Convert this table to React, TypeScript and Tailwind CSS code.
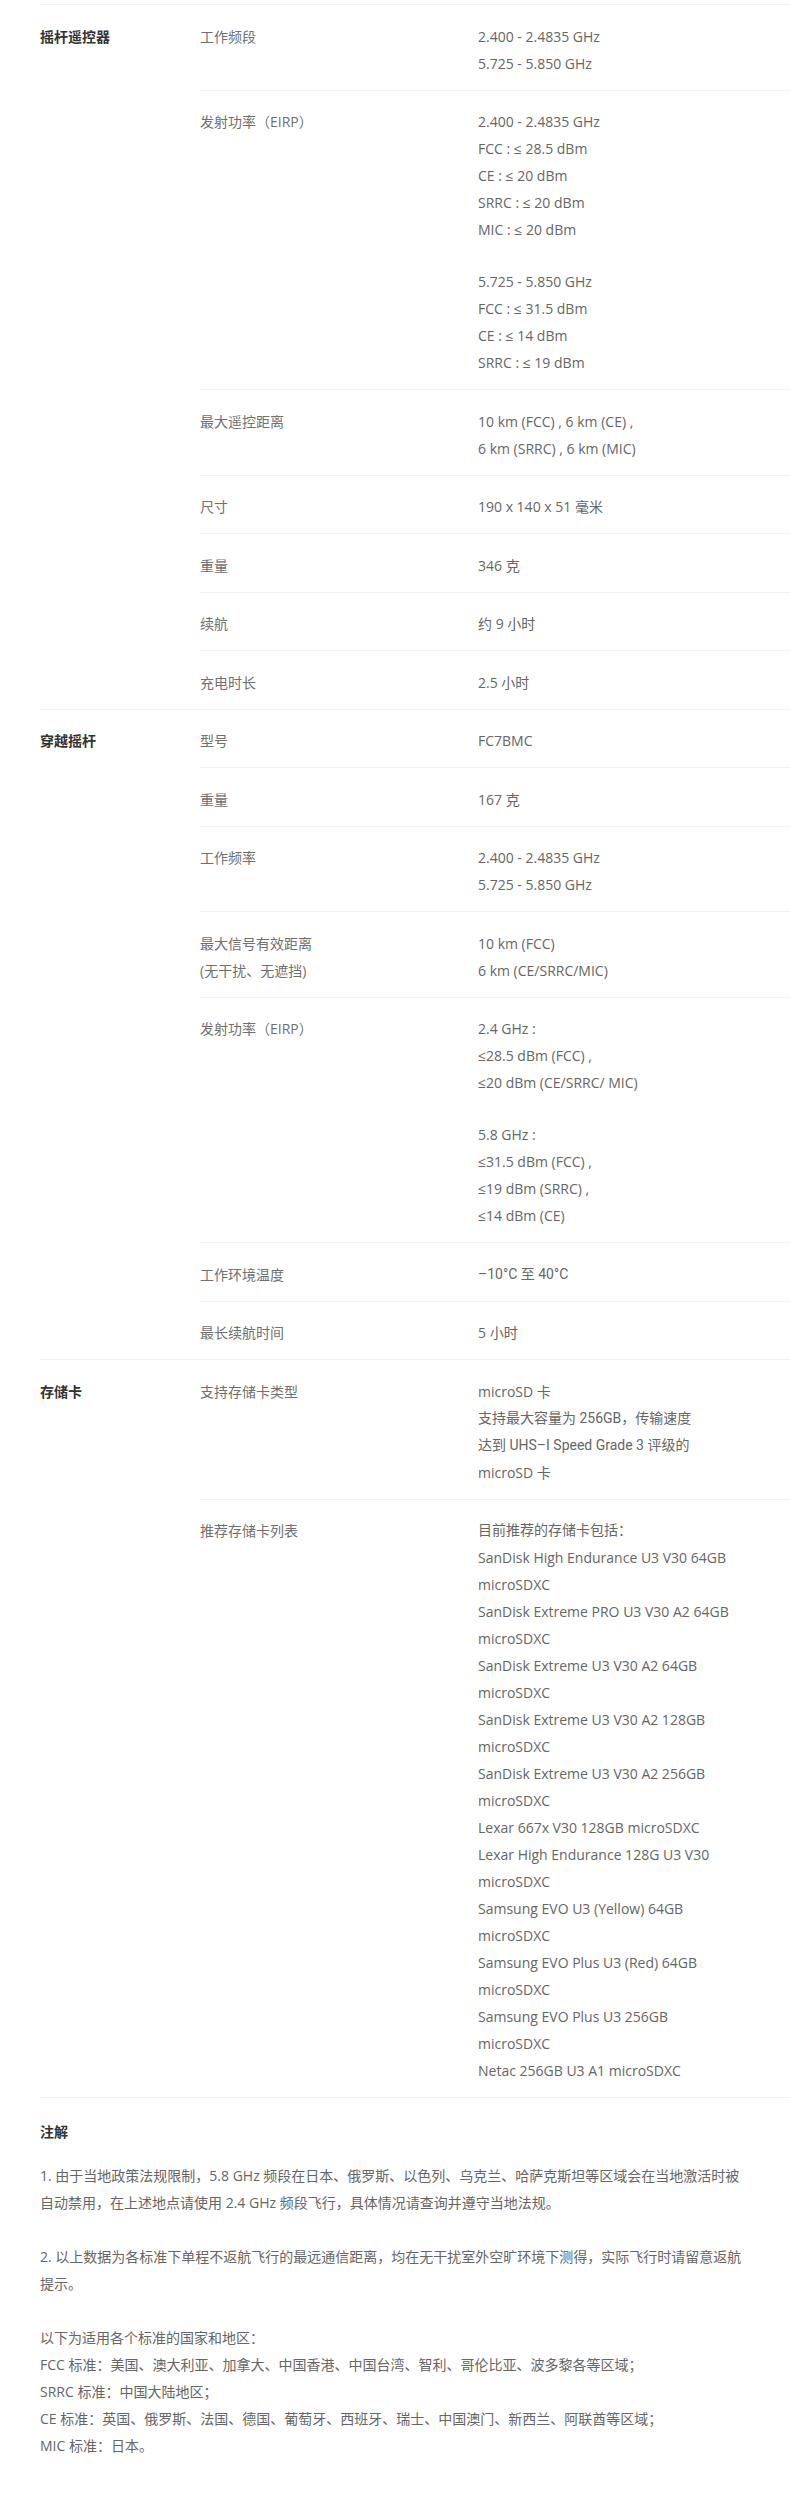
import React from "react";

type Row = { label: React.ReactNode[]; value: React.ReactNode[]; alt?: boolean };
type Group = { title: string; rows: Row[] };

const BLANK = "__blank__";

const groups: Group[] = [
  {
    title: "摇杆遥控器",
    rows: [
      { label: ["工作频段"], value: ["2.400 - 2.4835 GHz", "5.725 - 5.850 GHz"] },
      {
        label: ["发射功率（EIRP）"],
        value: [
          "2.400 - 2.4835 GHz",
          "FCC : ≤ 28.5 dBm",
          "CE : ≤ 20 dBm",
          "SRRC : ≤ 20 dBm",
          "MIC : ≤ 20 dBm",
          BLANK,
          "5.725 - 5.850 GHz",
          "FCC : ≤ 31.5 dBm",
          "CE : ≤ 14 dBm",
          "SRRC : ≤ 19 dBm",
        ],
      },
      { label: ["最大遥控距离"], value: ["10 km (FCC) , 6 km (CE) ,", "6 km (SRRC) , 6 km (MIC)"] },
      { label: ["尺寸"], value: ["190 x 140 x 51 毫米"] },
      { label: ["重量"], value: ["346 克"] },
      { label: ["续航"], value: ["约 9 小时"] },
      { label: ["充电时长"], value: ["2.5 小时"] },
    ],
  },
  {
    title: "穿越摇杆",
    rows: [
      { label: ["型号"], value: ["FC7BMC"] },
      { label: ["重量"], value: ["167 克"] },
      { label: ["工作频率"], value: ["2.400 - 2.4835 GHz", "5.725 - 5.850 GHz"] },
      { label: ["最大信号有效距离", "(无干扰、无遮挡)"], value: ["10 km (FCC)", "6 km (CE/SRRC/MIC)"] },
      {
        label: ["发射功率（EIRP）"],
        value: [
          "2.4 GHz :",
          "≤28.5 dBm (FCC) ,",
          "≤20 dBm (CE/SRRC/ MIC)",
          BLANK,
          "5.8 GHz :",
          "≤31.5 dBm (FCC) ,",
          "≤19 dBm (SRRC) ,",
          "≤14 dBm (CE)",
        ],
      },
      { label: ["工作环境温度"], value: ["–10°C 至 40°C"], alt: true },
      { label: ["最长续航时间"], value: ["5 小时"] },
    ],
  },
  {
    title: "存储卡",
    rows: [
      {
        label: ["支持存储卡类型"],
        value: ["microSD 卡", "支持最大容量为 256GB，传输速度", "达到 UHS–I Speed Grade 3 评级的", "microSD 卡"],
        alt: true,
      },
      {
        label: ["推荐存储卡列表"],
        value: [
          "目前推荐的存储卡包括：",
          "SanDisk High Endurance U3 V30 64GB",
          "microSDXC",
          "SanDisk Extreme PRO U3 V30 A2 64GB",
          "microSDXC",
          "SanDisk Extreme U3 V30 A2 64GB",
          "microSDXC",
          "SanDisk Extreme U3 V30 A2 128GB",
          "microSDXC",
          "SanDisk Extreme U3 V30 A2 256GB",
          "microSDXC",
          "Lexar 667x V30 128GB microSDXC",
          "Lexar High Endurance 128G U3 V30",
          "microSDXC",
          "Samsung EVO U3 (Yellow) 64GB",
          "microSDXC",
          "Samsung EVO Plus U3 (Red) 64GB",
          "microSDXC",
          "Samsung EVO Plus U3 256GB",
          "microSDXC",
          "Netac 256GB U3 A1 microSDXC",
        ],
      },
    ],
  },
];

function ValueLines({ lines, alt }: { lines: React.ReactNode[]; alt?: boolean }) {
  return (
    <div className="flex flex-col">
      {lines.map((l, i) =>
        l === BLANK ? (
          <div key={i} className="h-[25px]" />
        ) : (
          <div
            key={i}
            className={
              alt && i !== 0 && i !== 3
                ? "whitespace-nowrap font-['Roboto','Noto_Sans_CJK_SC',sans-serif]"
                : alt && lines.length === 1
                ? "whitespace-nowrap font-['Roboto','Noto_Sans_CJK_SC',sans-serif]"
                : "whitespace-nowrap"
            }
          >
            {l}
          </div>
        )
      )}
    </div>
  );
}

function ListValue({ lines }: { lines: React.ReactNode[] }) {
  return (
    <div className="flex flex-col">
      {lines.map((l, i) => (
        <div
          key={i}
          className={
            i === 0
              ? "whitespace-nowrap font-['Roboto','Noto_Sans_CJK_SC',sans-serif]"
              : "whitespace-nowrap"
          }
        >
          {l}
        </div>
      ))}
    </div>
  );
}

export default function App() {
  return (
    <div className="min-h-[2495px] bg-white pt-1 font-['Open_Sans','Noto_Sans_CJK_SC',sans-serif] text-[14px] leading-[27px] text-[#666]">
      <div className="ml-10 border-t border-[#f0f0f0]">
        {groups.map((g) => (
          <div key={g.title} className="flex border-b border-[#f0f0f0]">
            <div className="w-[160px] shrink-0 pt-[17.5px] font-bold text-[#333]">{g.title}</div>
            <div className="flex-1">
              {g.rows.map((r, i) => (
                <div
                  key={i}
                  className={
                    i < g.rows.length - 1
                      ? "flex border-b border-[#f0f0f0] pt-[17.5px] pb-[13px]"
                      : "flex pt-[17.5px] pb-[13px]"
                  }
                >
                  <div className="w-[278px] shrink-0 text-[#707070]">
                    {r.label.map((l, j) => (
                      <div key={j}>{l}</div>
                    ))}
                  </div>
                  {g.title === "存储卡" && i === 1 ? (
                    <ListValue lines={r.value} />
                  ) : (
                    <ValueLines lines={r.value} alt={r.alt} />
                  )}
                </div>
              ))}
            </div>
          </div>
        ))}
      </div>

      <div className="px-10 pt-[19.5px] pb-[35.5px]">
        <div className="font-bold text-[#333]">注解</div>
        <p className="mt-[17px]">
          1. 由于当地政策法规限制，5.8 GHz 频段在日本、俄罗斯、以色列、乌克兰、哈萨克斯坦等区域会在当地激活时被自动禁用，在上述地点请使用 2.4 GHz 频段飞行，具体情况请查询并遵守当地法规。
        </p>
        <p className="mt-[27px]">
          2. 以上数据为各标准下单程不返航飞行的最远通信距离，均在无干扰室外空旷环境下测得，实际飞行时请留意返航提示。
        </p>
        <div className="mt-[27px]">
          <div>以下为适用各个标准的国家和地区：</div>
          <div>FCC 标准：美国、澳大利亚、加拿大、中国香港、中国台湾、智利、哥伦比亚、波多黎各等区域；</div>
          <div>SRRC 标准：中国大陆地区；</div>
          <div>CE 标准：英国、俄罗斯、法国、德国、葡萄牙、西班牙、瑞士、中国澳门、新西兰、阿联酋等区域；</div>
          <div>MIC 标准：日本。</div>
        </div>
      </div>
    </div>
  );
}
